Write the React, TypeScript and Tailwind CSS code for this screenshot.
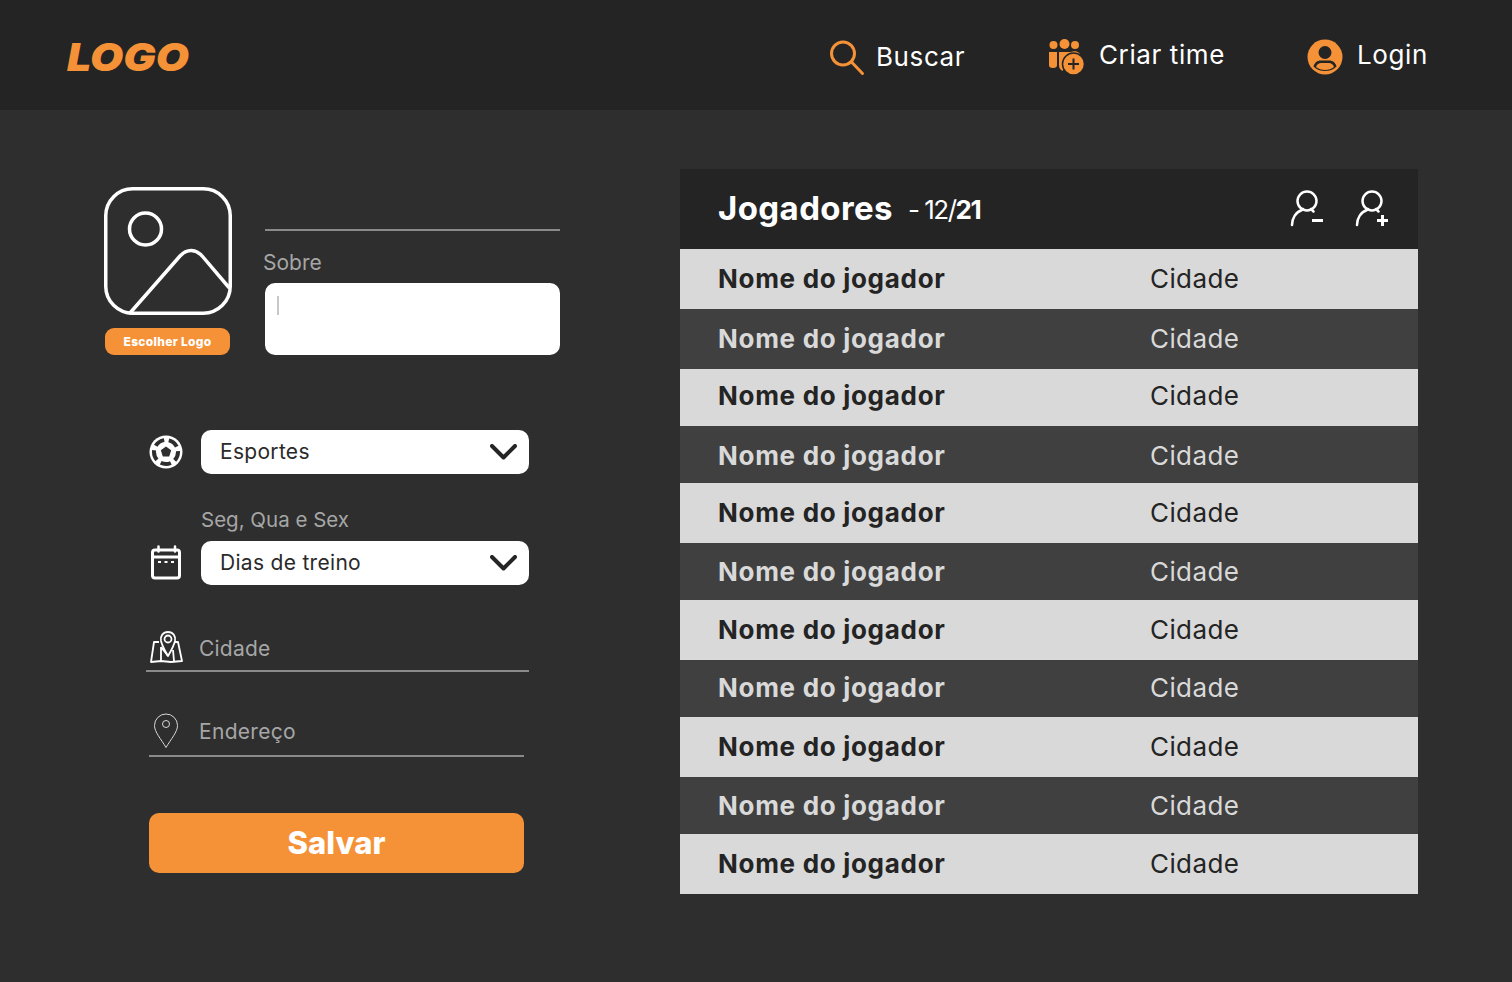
const orange = "#f59237";

const rows = [
  { h: "h-[60px] pb-[2px]", light: true },
  { h: "h-[60px] pb-[2px]", light: false },
  { h: "h-[57px] pb-[4px]", light: true },
  { h: "h-[57px] pt-[2px]", light: false },
  { h: "h-[60px] pb-[2px]", light: true },
  { h: "h-[57px]", light: false },
  { h: "h-[60px] pb-[2px]", light: true },
  { h: "h-[57px] pb-[2px]", light: false },
  { h: "h-[60px] pb-[2px]", light: true },
  { h: "h-[57px]", light: false },
  { h: "h-[60px] pb-[2px]", light: true },
];

function SearchIcon() {
  return (
    <svg width="36" height="36" viewBox="0 0 36 36" fill="none" stroke={orange} strokeWidth="3" strokeLinecap="round" className="-translate-y-[1px]">
      <circle cx="14" cy="13.5" r="11.5" />
      <path d="M22.5 22l11 11.5" />
    </svg>
  );
}

function TeamIcon() {
  return (
    <svg width="36" height="36" viewBox="0 0 36 36">
      <g fill={orange}>
        <circle cx="5.5" cy="6" r="4" />
        <circle cx="16.5" cy="5" r="5" />
        <circle cx="27" cy="6" r="4" />
        <path d="M1 13h8v13c0 2-1 3-4 3s-4-1-4-3z" />
        <path d="M11 13h12a7 7 0 0 1 9 2v3h-14l-3 9v5c-3-1-4-3-4-6z" />
        <circle cx="25.5" cy="25" r="11" stroke="#242424" strokeWidth="1.5" />
      </g>
      <path d="M25.5 19.5v11M20 25h11" stroke="#242424" strokeWidth="2" />
    </svg>
  );
}

function UserCircleIcon() {
  return (
    <svg width="36" height="36" viewBox="0 0 36 36">
      <circle cx="18" cy="18" r="17.5" fill={orange} />
      <circle cx="18" cy="13.5" r="6.5" fill="#242424" />
      <path d="M6.5 27.5c1-4 4-6 7-6h9c3 0 6 2 7 6-3 3-7 4.5-11.5 4.5s-8.500-1.500-11.500-4.500z" fill="#242424" />
      <path d="M9 28c1-3 3-4 5-4h8c2 0 4 1 5 4-2.500 2-5.500 3-9 3s-6.500-1-9-3z" fill={orange} />
    </svg>
  );
}

function NavItem({ icon, label, className }: { icon: React.ReactNode; label: string; className: string }) {
  return (
    <div className={`flex items-center ${className}`}>
      <div className="translate-y-[2px]">{icon}</div>
      <span className="text-[26px] text-white tracking-[0.6px]">{label}</span>
    </div>
  );
}

function PictureIcon() {
  return (
    <svg width="128" height="130" viewBox="0 0 128 130" fill="none" stroke="#fff" strokeWidth="3.5">
      <rect x="1.750" y="1.750" width="124.500" height="124.500" rx="27" />
      <circle cx="41.500" cy="42" r="16" />
      <path d="M26 126L76 69c7-7.500 16-7.500 23 1L124.500 100" strokeLinecap="round" />
    </svg>
  );
}

function BallIcon() {
  return (
    <svg width="34" height="34" viewBox="0 0 34 34">
      <circle cx="17" cy="17" r="16.500" fill="#fff" />
      <circle cx="17" cy="17" r="12" fill="none" stroke="#2e2e2e" strokeWidth="4" strokeDasharray="10.400 4.680" strokeDashoffset="1.300" />
      <path d="M17 11.500l5.200 3.800-2 6.200h-6.400l-2-6.200z" fill="#2e2e2e" />
    </svg>
  );
}

function CalendarIcon() {
  return (
    <svg width="34" height="36" viewBox="0 0 34 36" fill="none" stroke="#fff" strokeWidth="3">
      <rect x="3.500" y="5" width="27" height="28" rx="2.500" />
      <path d="M3 12h28" />
      <path d="M9.500 1.500v5M26 1.500v5" strokeLinecap="round" strokeWidth="2.500" />
      <path d="M9 17h3M15.500 17h3M22 17h3" strokeWidth="2" />
    </svg>
  );
}

function MapPinIcon() {
  return (
    <svg width="34" height="34" viewBox="0 0 34 34" fill="none" stroke="#fff" strokeWidth="1.800" strokeLinejoin="round" className="-translate-y-[1px]">
      <path d="M19 2c-5 0-8 4-7 9 1 4 4 10 7 15 3-5 6-11 7-15 1-5-2-9-7-9z" />
      <circle cx="19" cy="9" r="3.500" />
      <path d="M10 12H5L2 32l10-1 10 1 11-1-4-19h-3" />
      <path d="M12 17v14M12 17l7 9M24 20l1 11" />
    </svg>
  );
}

function PinIcon() {
  return (
    <svg width="26" height="36" viewBox="0 0 26 36" fill="none" stroke="#d8d8d8" strokeWidth="1">
      <path d="M13 34.500C8 26 1.500 19 1.500 12.500a11.500 11.500 0 0 1 23 0C24.500 19 18 26 13 34.500z" />
      <circle cx="13" cy="11" r="3.500" />
    </svg>
  );
}

function UserBadgeIcon({ plus }: { plus?: boolean }) {
  return (
    <svg width="36" height="38" viewBox="0 0 36 38" fill="none" stroke="#fff" strokeWidth="2.500">
      <circle cx="18" cy="11" r="9.500" />
      <path d="M3 35c0-7 4-13 10-15l1-1M22 19l2.500 2.500" strokeLinecap="round" />
      {plus ? (
        <path d="M23 30.500h11M28.500 25v11" strokeWidth="3" />
      ) : (
        <path d="M23 30.500h11" strokeWidth="3" />
      )}
    </svg>
  );
}

function SelectBox({ label }: { label: string }) {
  return (
    <div className="w-[328px] h-[44px] bg-white rounded-[10px] flex items-center justify-between pl-[19px] pr-[12px]">
      <span className="text-[21px] text-[#2a2a2a] tracking-[0.3px]">{label}</span>
      <svg width="27" height="16" viewBox="0 0 27 16" fill="none" stroke="#252525" strokeWidth="4" strokeLinecap="round" strokeLinejoin="round">
        <path d="M2 2l11.500 11.500L25 2" />
      </svg>
    </div>
  );
}

export default function App() {
  return (
    <div className="min-h-screen bg-[#2e2e2e] font-['Inter',sans-serif]">
      <header className="h-[110px] bg-[#242424] flex items-center pl-[67px]">
        <div className="w-[762px] pt-[4px]">
          <span className="inline-block origin-left scale-x-[1.1] text-[39px] font-black italic text-[#f59237]">LOGO</span>
        </div>
        <NavItem icon={<SearchIcon />} label="Buscar" className="gap-[11px] w-[219px] pt-[3px]" />
        <NavItem icon={<TeamIcon />} label="Criar time" className="gap-[15px] w-[259px] -mt-[1px]" />
        <NavItem icon={<UserCircleIcon />} label="Login" className="gap-[14px] -mt-[1px]" />
      </header>

      <main className="flex pl-[104px] pt-[59px]">
        <div className="w-[576px] pt-[18px]">
          <div className="flex">
            <div className="w-[128px] flex flex-col">
              <PictureIcon />
              <button className="mt-[11px] ml-[1px] w-[125px] h-[27px] rounded-[9px] bg-[#f59237] text-white text-[12px] tracking-[0.3px] font-extrabold">
                Escolher Logo
              </button>
            </div>
            <div className="ml-[33px] w-[295px]">
              <div className="mt-[42px] h-[2px] bg-[#8a8a8a]" />
              <div className="text-[21px] text-[#a6a6a6] mt-[17px] -ml-[2px] h-[36px] leading-[30px]">Sobre</div>
              <div className="h-[72px] bg-white rounded-[10px] pl-[12px] pt-[13px] -mt-[1px]">
                <div className="w-[2px] h-[19px] bg-[#c8c8c8]" />
              </div>
            </div>
          </div>

          <div className="pl-[45px] mt-[75px] w-[425px]">
            <div className="flex items-center gap-[18px]">
              <BallIcon />
              <SelectBox label="Esportes" />
            </div>
            <div className="text-[20.500px] text-[#a6a6a6] ml-[52px] mt-[31px] leading-[30px]">Seg, Qua e Sex</div>
            <div className="flex items-center gap-[18px] mt-[6px]">
              <CalendarIcon />
              <SelectBox label="Dias de treino" />
            </div>

            <div className="mt-[46px] h-[41px] w-[383px] -ml-[3px] border-b-2 border-[#8a8a8a] flex items-start gap-[16px] pl-[3px]">
              <MapPinIcon />
              <span className="text-[21px] text-[#a6a6a6] leading-[36px] tracking-[0.2px]">Cidade</span>
            </div>

            <div className="mt-[41px] h-[44px] w-[375px] border-b-2 border-[#8a8a8a] flex items-start pl-[4px] gap-[20px]">
              <PinIcon />
              <span className="text-[21px] text-[#a6a6a6] leading-[38px] tracking-[0.3px]">Endereço</span>
            </div>

            <button className="mt-[56px] w-[375px] h-[60px] rounded-[10px] bg-[#f59237] text-white text-[31px] font-extrabold">
              Salvar
            </button>
          </div>
        </div>

        <section className="w-[738px]">
          <div className="h-[80px] bg-[#242424] flex items-center pl-[38px] pr-[28px]">
            <span className="text-[33px] font-bold text-white tracking-[0.4px]">Jogadores</span>
            <span className="text-[26px] text-white ml-[15px] tracking-[-1.5px]">
              - 12/<span className="font-bold">21</span>
            </span>
            <div className="ml-auto flex gap-[29px]">
              <UserBadgeIcon />
              <UserBadgeIcon plus />
            </div>
          </div>
          {rows.map((row, i) => (
            <div
              key={i}
              className={`${row.h} flex items-center pl-[38px] ${row.light ? "bg-[#d9d9d9] text-[#242424]" : "bg-[#404040] text-[#d9d9d9]"}`}
            >
              <span className="w-[432px] text-[26px] font-bold tracking-[0.7px]">Nome do jogador</span>
              <span className="text-[26px] tracking-[0.4px]">Cidade</span>
            </div>
          ))}
        </section>
      </main>
    </div>
  );
}
